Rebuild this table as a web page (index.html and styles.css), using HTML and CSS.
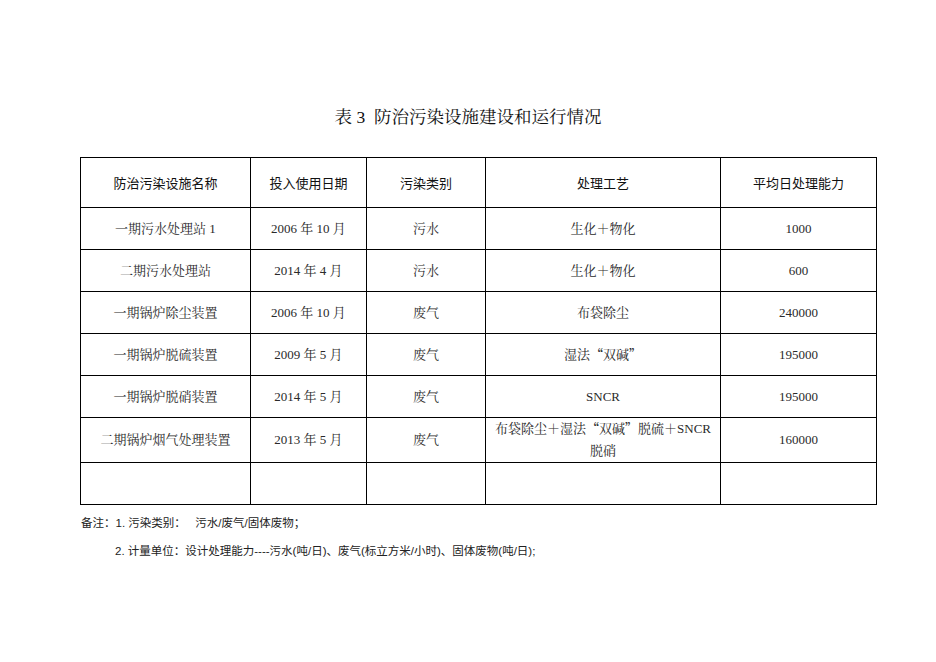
FILE: index.html
```html
<!DOCTYPE html>
<html lang="zh-CN">
<head>
<meta charset="utf-8">
<title>表3 防治污染设施建设和运行情况</title>
<link rel="stylesheet" href="styles.css">
</head>
<body>
<div class="page">
  <h1 class="title">表 3&nbsp; 防治污染设施建设和运行情况</h1>
  <table class="grid">
    <colgroup>
      <col class="c1"><col class="c2"><col class="c3"><col class="c4"><col class="c5">
    </colgroup>
    <thead>
      <tr class="head">
        <th>防治污染设施名称</th>
        <th>投入使用日期</th>
        <th>污染类别</th>
        <th>处理工艺</th>
        <th>平均日处理能力</th>
      </tr>
    </thead>
    <tbody>
      <tr class="row">
        <td>一期污水处理站 1</td><td>2006 年 10 月</td><td>污水</td><td>生化＋物化</td><td>1000</td>
      </tr>
      <tr class="row">
        <td>二期污水处理站</td><td>2014 年 4 月</td><td>污水</td><td>生化＋物化</td><td>600</td>
      </tr>
      <tr class="row">
        <td>一期锅炉除尘装置</td><td>2006 年 10 月</td><td>废气</td><td>布袋除尘</td><td>240000</td>
      </tr>
      <tr class="row">
        <td>一期锅炉脱硫装置</td><td>2009 年 5 月</td><td>废气</td><td>湿法<span class="q">“</span>双碱<span class="q">”</span></td><td>195000</td>
      </tr>
      <tr class="row">
        <td>一期锅炉脱硝装置</td><td>2014 年 5 月</td><td>废气</td><td>SNCR</td><td>195000</td>
      </tr>
      <tr class="row tall">
        <td>二期锅炉烟气处理装置</td><td>2013 年 5 月</td><td>废气</td><td>布袋除尘＋湿法<span class="q">“</span>双碱<span class="q">”</span>脱硫＋SNCR<br>脱硝</td><td>160000</td>
      </tr>
      <tr class="row">
        <td></td><td></td><td></td><td></td><td></td>
      </tr>
    </tbody>
  </table>
  <div class="notes">
    <p class="note">备注：1. 污染类别：&nbsp;&nbsp; 污水/废气/固体废物；</p>
    <p class="note indent">2. 计量单位：设计处理能力----污水(吨/日)、废气(标立方米/小时)、固体废物(吨/日);</p>
  </div>
</div>
</body>
</html>
```
FILE: styles.css
```css
html, body {
  margin: 0;
  padding: 0;
  background: #ffffff;
}

.page {
  width: 936px;
  height: 662px;
  padding-top: 105px;
  box-sizing: border-box;
}

.title {
  margin: 0;
  height: 24px;
  line-height: 24px;
  font-size: 17.5px;
  font-weight: normal;
  text-align: center;
  color: #111;
  font-family: "Liberation Serif", "Noto Serif CJK SC", "Noto Sans CJK SC", serif;
}

.grid {
  margin: 28px 0 0 80px;
  width: 796px;
  border-collapse: collapse;
  table-layout: fixed;
}

.c1 { width: 170px; }
.c2 { width: 116px; }
.c3 { width: 119px; }
.c4 { width: 235px; }
.c5 { width: 156px; }

.grid th,
.grid td {
  border: 1px solid #000;
  padding: 0 4px;
  text-align: center;
  vertical-align: middle;
}

.grid th {
  font-family: "Liberation Sans", "Noto Sans CJK SC", sans-serif;
  font-size: 13px;
  font-weight: normal;
  color: #111;
}

.grid td {
  font-family: "Liberation Serif", "Noto Serif CJK SC", "Noto Sans CJK SC", serif;
  font-size: 13px;
  color: #2a2a2a;
  line-height: 22px;
}

.q {
  font-family: "Noto Sans CJK SC", sans-serif;
  line-height: 1;
}

.head { height: 50px; }
.row { height: 42px; }
.row.tall { height: 45px; }

.notes {
  margin-top: 4px;
  font-family: "Liberation Sans", "Noto Sans CJK SC", sans-serif;
  font-size: 11.5px;
  color: #222;
}

.note {
  margin: 0;
  height: 28px;
  line-height: 28px;
  padding-left: 81px;
}

.note.indent {
  padding-left: 115px;
}
```
